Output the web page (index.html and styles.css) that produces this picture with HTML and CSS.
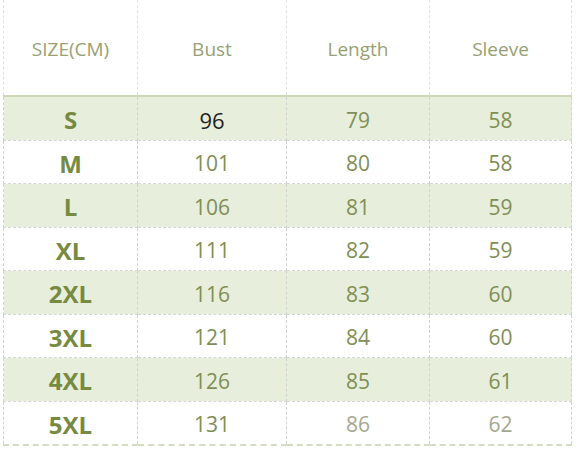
FILE: index.html
```html
<!DOCTYPE html>
<html>
<head>
<meta charset="utf-8">
<link rel="stylesheet" href="styles.css">
</head>
<body>
<table class="size-table">
  <colgroup>
    <col class="c1"><col class="c2"><col class="c3"><col class="c4">
  </colgroup>
  <thead>
    <tr class="head">
      <th>SIZE(CM)</th><th>Bust</th><th>Length</th><th>Sleeve</th>
    </tr>
  </thead>
  <tbody>
    <tr class="alt"><td class="size">S</td><td class="dark">96</td><td>79</td><td>58</td></tr>
    <tr><td class="size">M</td><td>101</td><td>80</td><td>58</td></tr>
    <tr class="alt"><td class="size">L</td><td>106</td><td>81</td><td>59</td></tr>
    <tr><td class="size">XL</td><td>111</td><td>82</td><td>59</td></tr>
    <tr class="alt"><td class="size">2XL</td><td>116</td><td>83</td><td>60</td></tr>
    <tr><td class="size">3XL</td><td>121</td><td>84</td><td>60</td></tr>
    <tr class="alt"><td class="size">4XL</td><td>126</td><td>85</td><td>61</td></tr>
    <tr class="last"><td class="size">5XL</td><td>131</td><td class="faded">86</td><td class="faded">62</td></tr>
  </tbody>
</table>
</body>
</html>
```
FILE: styles.css
```css
html, body {
  margin: 0;
  padding: 0;
  background: #ffffff;
}
body {
  font-family: "Open Sans", "Liberation Sans", sans-serif;
}
.size-table {
  margin-left: 3px;
  border-collapse: collapse;
  table-layout: fixed;
  width: 569px;
}
.c1 { width: 134px; }
.c2 { width: 149px; }
.c3 { width: 143px; }
.c4 { width: 142px; }

.size-table th,
.size-table td {
  padding: 3px 0 0;
  text-align: center;
  vertical-align: middle;
  border-left: 1px dashed #d2d2d2;
  border-right: 1px dashed #d2d2d2;
  border-bottom: 1px dashed #d6d6d6;
}
.head th {
  height: 92px;
  font-weight: 400;
  font-size: 19px;
  color: #979f73;
  border-top: none;
  border-bottom: 2px solid #cbd7b5;
  border-left-color: #e2e2e2;
  border-right-color: #e2e2e2;
}
.size-table td {
  height: 39.5px;
  font-size: 21px;
  color: #808e55;
}
.alt td {
  background: #e7eedb;
}
.size-table td.size {
  font-weight: 700;
  font-size: 24px;
  color: #768a42;
}
.size-table td.dark {
  color: #1e1e1e;
  font-size: 22px;
}
.size-table td.faded {
  color: #a3a991;
}
.last td {
  border-bottom: 2px dashed #d3dcc4;
}
```
